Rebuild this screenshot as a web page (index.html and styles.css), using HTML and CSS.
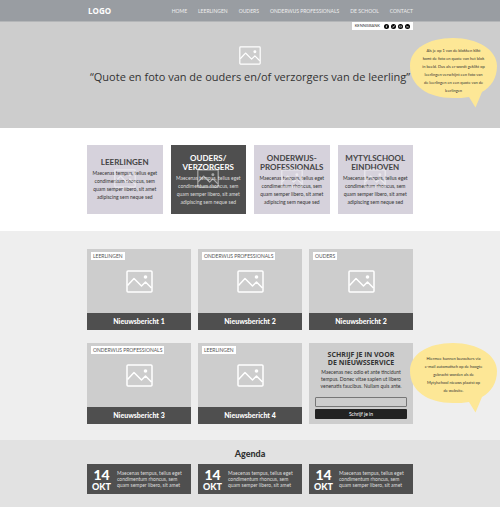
FILE: index.html
```html
<!DOCTYPE html>
<html lang="nl">
<head>
<meta charset="utf-8">
<meta name="viewport" content="width=device-width, initial-scale=1">
<title>Mytylschool Eindhoven</title>
<link rel="stylesheet" href="styles.css">
</head>
<body>
<svg class="sprite" aria-hidden="true">
  <symbol id="picture" viewBox="0 0 27 23">
    <rect x="1" y="1" width="25" height="21" rx="1" fill="none" stroke="currentColor" stroke-width="1.5"/>
    <path d="M1.5 15.500 8 8.500 15.500 16 19.500 12 25.500 18" fill="none" stroke="currentColor" stroke-width="1.500" stroke-linejoin="round"/>
    <circle cx="19.500" cy="7" r="1.800" fill="currentColor"/>
  </symbol>
  <symbol id="balloon" viewBox="0 0 87 70">
    <path d="M43 0C68 0 87 12 87 28C87 40 81 49 72 54L65.500 69.500L59 59C54 60 49 60 43 60C18 60 0 48 0 28C0 11 18 0 43 0Z" fill="#fde796"/>
  </symbol>
</svg>

<header class="topbar">
  <div class="container topbar-row">
    <a class="logo" href="#">LOGO</a>
    <nav class="menu">
      <a href="#">HOME</a>
      <a href="#">LEERLINGEN</a>
      <a href="#">OUDERS</a>
      <a href="#">ONDERWIJS PROFESSIONALS</a>
      <a href="#">DE SCHOOL</a>
      <a href="#">CONTACT</a>
    </nav>
  </div>
</header>

<main>
  <section class="hero">
    <div class="container hero-body">
      <div class="tools">
        <a href="#">KENNISBANK</a>
        <a class="social" href="#" aria-label="Facebook"><svg viewBox="0 0 10 10"><circle cx="5" cy="5" r="5"/><path d="M6.500 2.500H5.500Q4.800 2.500 4.800 3.500V8M3.500 5H6.300"/></svg></a>
        <a class="social" href="#" aria-label="Twitter"><svg viewBox="0 0 10 10"><circle cx="5" cy="5" r="5"/><path d="M2.500 6.800Q6 7.500 6.800 3.500M3 4 5 5 7.500 3"/></svg></a>
        <a class="social" href="#" aria-label="YouTube"><svg viewBox="0 0 10 10"><circle cx="5" cy="5" r="5"/><path d="M2.800 3.800H7.200V6.300H2.800Z"/></svg></a>
        <a class="social" href="#" aria-label="LinkedIn"><svg viewBox="0 0 10 10"><circle cx="5" cy="5" r="5"/><path d="M3 4.500V7M5 7V4.500M5 5.500Q7 3.500 7 7M3 3V3.500"/></svg></a>
      </div>
      <svg class="hero-icon"><use href="#picture"/></svg>
      <h1>“Quote en foto van de ouders en/of verzorgers van de leerling”</h1>
      <aside class="note note-hero">
        <svg class="note-shape"><use href="#balloon"/></svg>
        <p>Als je op 1 van de blokken klikt<br>komt de foto en quote van het blok<br>in beeld. Dus als er wordt geklikt op<br>leerlingen verschijnt een foto van<br>de leerlingen en een quote van de<br>leerlingen</p>
      </aside>
    </div>
  </section>

  <section class="audiences">
    <div class="container audience-grid">
      <article class="audience">
        <svg class="watermark"><use href="#picture"/></svg>
        <h2>LEERLINGEN</h2>
        <p>Maecenas tempus, tellus eget condimentum rhoncus, sem quam semper libero, sit amet adipiscing sem neque sed</p>
      </article>
      <article class="audience active">
        <svg class="watermark"><use href="#picture"/></svg>
        <h2>OUDERS/<br>VERZORGERS</h2>
        <p>Maecenas tempus, tellus eget condimentum rhoncus, sem quam semper libero, sit amet adipiscing sem neque sed</p>
      </article>
      <article class="audience">
        <svg class="watermark"><use href="#picture"/></svg>
        <h2>ONDERWIJS-<br>PROFESSIONALS</h2>
        <p>Maecenas tempus, tellus eget condimentum rhoncus, sem quam semper libero, sit amet adipiscing sem neque sed</p>
      </article>
      <article class="audience">
        <svg class="watermark"><use href="#picture"/></svg>
        <h2>MYTYLSCHOOL<br>EINDHOVEN</h2>
        <p>Maecenas tempus, tellus eget condimentum rhoncus, sem quam semper libero, sit amet adipiscing sem neque sed</p>
      </article>
    </div>
  </section>

  <section class="news">
    <div class="container news-grid">
      <article class="story">
        <span class="tag">LEERLINGEN</span>
        <div class="story-image"><svg><use href="#picture"/></svg></div>
        <h3>Nieuwsbericht 1</h3>
      </article>
      <article class="story">
        <span class="tag">ONDERWIJS PROFESSIONALS</span>
        <div class="story-image"><svg><use href="#picture"/></svg></div>
        <h3>Nieuwsbericht 2</h3>
      </article>
      <article class="story">
        <span class="tag">OUDERS</span>
        <div class="story-image"><svg><use href="#picture"/></svg></div>
        <h3>Nieuwsbericht 2</h3>
      </article>
      <article class="story">
        <span class="tag">ONDERWIJS PROFESSIONALS</span>
        <div class="story-image"><svg><use href="#picture"/></svg></div>
        <h3>Nieuwsbericht 3</h3>
      </article>
      <article class="story">
        <span class="tag">LEERLINGEN</span>
        <div class="story-image"><svg><use href="#picture"/></svg></div>
        <h3>Nieuwsbericht 4</h3>
      </article>
      <form class="signup">
        <h2>SCHRIJF JE IN VOOR<br>DE NIEUWSSERVICE</h2>
        <p>Maecenas nec odio et ante tincidunt<br>tempus. Donec vitae sapien ut libero<br>venenatis faucibus. Nullam quis ante.</p>
        <input type="email" aria-label="E-mail">
        <button type="submit">Schrijf je in</button>
        <aside class="note">
          <svg class="note-shape"><use href="#balloon"/></svg>
          <p>Hiermee kunnen bezoekers via<br>e-mail automatisch op de hoogte<br>gebracht worden als de<br>Mytylschool nieuws plaatst op<br>de website.</p>
        </aside>
      </form>
    </div>
  </section>

  <section class="agenda">
    <div class="container">
      <h2>Agenda</h2>
      <div class="agenda-grid">
        <article class="event">
          <time datetime="10-14"><b>14</b><span>OKT</span></time>
          <p>Maecenas tempus, tellus eget<br>condimentum rhoncus, sem<br>quam semper libero, sit amet</p>
        </article>
        <article class="event">
          <time datetime="10-14"><b>14</b><span>OKT</span></time>
          <p>Maecenas tempus, tellus eget<br>condimentum rhoncus, sem<br>quam semper libero, sit amet</p>
        </article>
        <article class="event">
          <time datetime="10-14"><b>14</b><span>OKT</span></time>
          <p>Maecenas tempus, tellus eget<br>condimentum rhoncus, sem<br>quam semper libero, sit amet</p>
        </article>
      </div>
    </div>
  </section>
</main>
</body>
</html>
```
FILE: styles.css
```css
* { box-sizing: border-box; }

body {
  margin: 0;
  background: #e2e2e2;
  color: #333;
  font: 5px/8px Lato, "Open Sans", sans-serif;
}

h1, h2, h3, p { margin: 0; }
a { color: inherit; text-decoration: none; }
svg { display: block; }
.sprite { position: absolute; width: 0; height: 0; }

.container {
  position: relative;
  max-width: 326px;
  margin: 0 auto;
}

/* Top bar */
.topbar {
  background: #999da2;
  border-bottom: 1px solid #b4b6b8;
  color: #fff;
}
.topbar-row {
  display: flex;
  align-items: center;
  justify-content: space-between;
  height: 21px;
}
.logo { font: bold 8px/10px "Open Sans", sans-serif; padding-left: 1px; }
.menu { display: flex; gap: 11px; color: #eee; }

/* Hero */
.hero { background: #cdcdcd; }
.hero-body {
  display: flex;
  flex-direction: column;
  align-items: center;
  padding-bottom: 43px;
}
.tools {
  display: flex;
  align-items: center;
  align-self: flex-end;
  gap: 2px;
  height: 8px;
  padding: 0 3px;
  background: #fff;
  font-size: 4px;
}
.tools a:first-child { margin-right: 2px; }
.social svg { width: 5px; height: 5px; }
.social path { fill: none; stroke: #fff; stroke-width: 1; }
.hero-icon { width: 22px; height: 19px; margin: 16px 0 4px; color: #fff; }
.hero h1 {
  font: 11px/16px "Open Sans", sans-serif;
  white-space: nowrap;
}

/* Yellow remarks beside the page column */
.note {
  position: absolute;
  left: calc(100% - 3px);
  top: 0;
  width: 87px;
  height: 70px;
  padding-top: 12px;
  color: #333;
  text-align: center;
  white-space: nowrap;
}
.note-hero { top: 16px; padding-top: 9px; }
.note-shape { position: absolute; inset: 0; width: 87px; height: 70px; }
.note p { position: relative; font-size: 4px; }

/* Audience blocks */
.audiences { background: #fff; padding: 17px 0; }
.audience-grid {
  display: grid;
  grid-template-columns: repeat(4, 1fr);
  gap: 8px;
}
.audience {
  position: relative;
  display: flex;
  flex-direction: column;
  justify-content: center;
  gap: 2px;
  min-height: 69px;
  padding: 0 5px;
  background: #d6d2dc;
  text-align: center;
}
.audience.active { background: #4f4f4f; color: #ddd; }
.audience h2 { font: bold 8px/9px Lato, sans-serif; white-space: nowrap; color: #444; }
.audience.active h2 { color: #fff; }
.watermark {
  position: absolute;
  left: calc(50% - 11px);
  top: 24px;
  width: 22px;
  height: 19px;
  color: #fff;
  opacity: .5;
}

/* News */
.news { background: #eee; padding: 18px 0 16px; }
.news-grid {
  display: grid;
  grid-template-columns: repeat(3, 1fr);
  gap: 13px 7px;
}
.story { position: relative; background: #cdcdcd; }
.tag {
  position: absolute;
  left: 4px;
  top: 3px;
  padding: 0 2px;
  background: #fff;
  color: #555;
}
.story-image {
  display: flex;
  justify-content: center;
  padding: 21px 0 20px;
  color: #fff;
}
.story-image svg { width: 27px; height: 23px; }
.story-image + h3 {
  background: #4f4f4f;
  color: #fff;
  font: 900 7px/17px Lato, sans-serif;
  text-align: center;
}
.signup {
  position: relative;
  display: flex;
  flex-direction: column;
  padding: 8px 6px 0;
  background: #cdcdcd;
  text-align: center;
}
.signup h2 { font: bold 7px/8px "Open Sans", sans-serif; }
.signup > p { margin: 2px 0 7px; line-height: 7px; white-space: nowrap; }
.signup input {
  width: 100%;
  height: 10px;
  margin-bottom: 2px;
  padding: 0 3px;
  border: 1px solid #777;
  border-radius: 1px;
  background: transparent;
  font: inherit;
}
.signup button {
  height: 10px;
  padding: 0;
  border: 0;
  border-radius: 1px;
  background: #222;
  color: #fff;
  font: inherit;
}

/* Agenda */
.agenda { background: #e2e2e2; padding: 8px 0 13px; }
.agenda h2 {
  margin-bottom: 5px;
  font: 900 9px/11px Lato, sans-serif;
  text-align: center;
}
.agenda-grid {
  display: grid;
  grid-template-columns: repeat(3, 1fr);
  gap: 7px;
}
.event {
  display: flex;
  align-items: center;
  gap: 6px;
  height: 30px;
  padding-left: 5px;
  background: #4f4f4f;
  color: #ddd;
}
.event time {
  display: flex;
  flex-direction: column;
  color: #fff;
  font: 900 9px/9px Lato, sans-serif;
  text-align: center;
}
.event b { font: 900 14px/14px Lato, sans-serif; }
.event p { line-height: 6px; white-space: nowrap; }
```
